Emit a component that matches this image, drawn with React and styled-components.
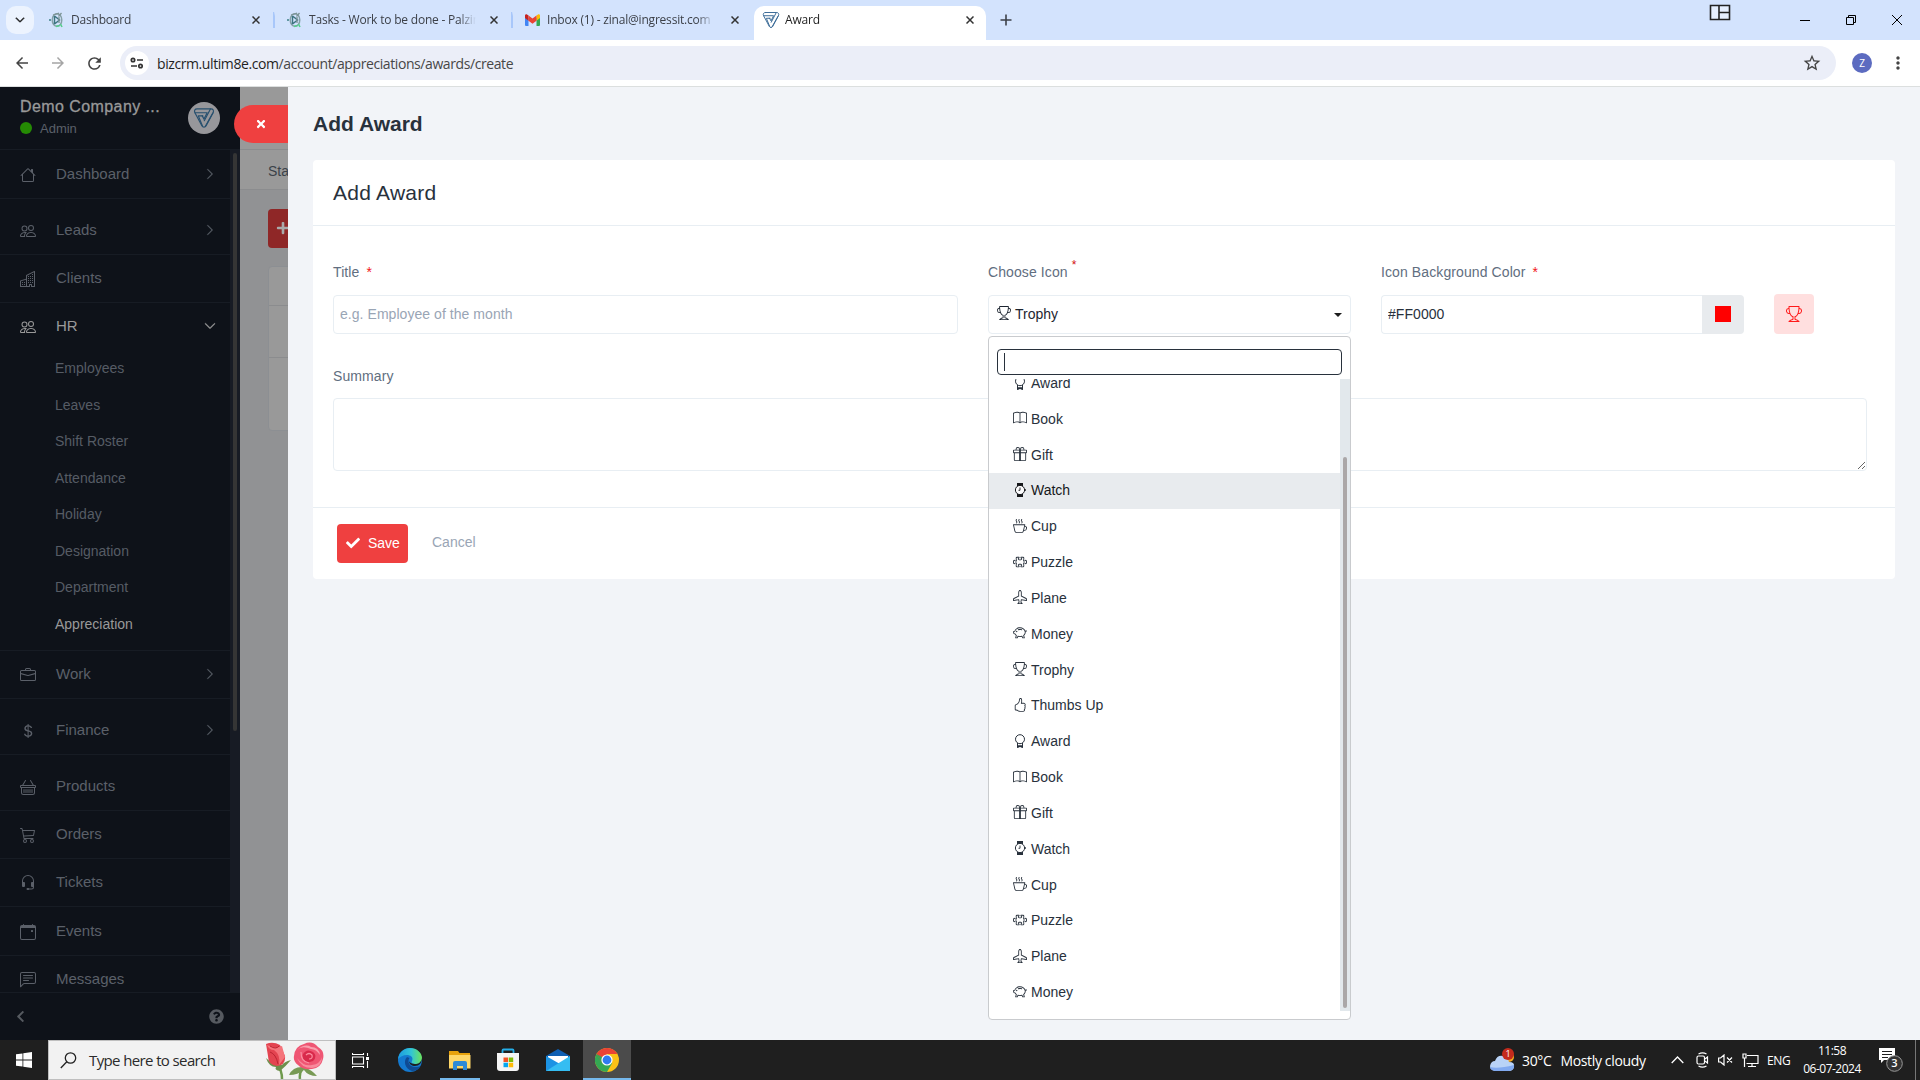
import React from "react";
import styled, { createGlobalStyle, css } from "styled-components";
import {
  BsAirplane,
  BsBasket,
  BsBook,
  BsBriefcase,
  BsBuildings,
  BsCalendarEvent,
  BsCart3,
  BsChatLeftText,
  BsChevronDown,
  BsChevronRight,
  BsCupHot,
  BsCurrencyDollar,
  BsGift,
  BsHandThumbsUp,
  BsHeadset,
  BsHouse,
  BsPeople,
  BsPiggyBank,
  BsPuzzle,
  BsTrophy,
} from "react-icons/bs";
import {
  FaCheck,
  FaChevronLeft,
  FaPlus,
  FaQuestionCircle,
  FaTimes,
} from "react-icons/fa";
import {
  MdArrowBack,
  MdArrowForward,
  MdMoreVert,
  MdRefresh,
  MdStarOutline,
} from "react-icons/md";

/* ---------- icons ---------- */

const BrandLogo = ({ size, color }) => (
  <svg width={size} height={size} viewBox="0 0 24 24" fill="none" stroke={color} strokeWidth="1.3" strokeLinejoin="round" strokeLinecap="round">
    <path d="M4.500 2h15c2.500 0 3.500 2 2.400 4.200L14.300 20.500c-1 2-3.600 2-4.600 0L2.100 6.200C1 4 2 2 4.500 2z" />
    <path d="M2.200 6.300h13.300L12 13.200l-2-3.700" />
    <path d="M21.800 6.300L13.500 21M19 2.200L12.300 15" />
    <path d="M10.200 20.500L5.800 9.700h5" />
  </svg>
);

const PalzinLogo = () => (
  <svg width="14" height="16" viewBox="0 0 14 16" fill="none">
    <ellipse cx="8" cy="8" rx="4.800" ry="6.300" stroke="#84a0a6" strokeWidth="1.400" />
    <path d="M5.500 4v8.300M5.500 4l5 4-5 4" stroke="#3d7480" strokeWidth="1.500" />
    <path d="M4 3l6-1.800M12.500 1l-3 3.500M10 5v6" stroke="#7d9496" strokeWidth="1.300" />
    <path d="M7 14.500l3.500-1M11.500 12l1.500 3" stroke="#57cf8e" strokeWidth="1.600" />
    <circle cx="1" cy="8" r="1" fill="#3b7f86" />
  </svg>
);

const GmailLogo = () => (
  <svg width="15" height="12" viewBox="0 0 15 12">
    <path d="M0 2v9a1 1 0 0 0 1 1h2.500V4z" fill="#4285f4" />
    <path d="M15 2v9a1 1 0 0 1-1 1h-2.500V4z" fill="#34a853" />
    <path d="M11.500 1.500L13 .4c.9-.6 2 0 2 1.200V4l-3.500 2.700z" fill="#fbbc04" />
    <path d="M3.500 1.500L2 .4C1.100-.2 0 .4 0 1.600V4l3.500 2.700z" fill="#c5221f" />
    <path d="M3.500 1.500l4 3 4-3v5.200l-4 3-4-3z" fill="#ea4335" />
  </svg>
);

const AwardIcon = () => (
  <svg width="14" height="14" viewBox="0 0 14 14" fill="none" stroke="currentColor">
    <circle cx="7" cy="5.200" r="4.500" strokeWidth="1" />
    <path d="M4.500 9v4.200L7 12.200l2.500 1V9" strokeWidth="1" />
    <path d="M4 11.200h6V14l-3-.9L4 14z" fill="currentColor" stroke="none" />
  </svg>
);

const WatchIcon = () => (
  <svg width="14" height="14" viewBox="0 0 14 14" fill="none" stroke="currentColor">
    <path d="M4 0h6v3H4zM4 11h6v3H4z" fill="currentColor" stroke="none" />
    <circle cx="7" cy="7" r="4.600" fill="#fff" fillOpacity=".85" />
    <path d="M7 4.500V7.300H5.500M12.300 6v2" strokeWidth=".9" />
  </svg>
);

const SiteInfoIcon = () => (
  <svg width="14" height="12" viewBox="0 0 14 12" fill="none" stroke="#333" strokeWidth="1.700">
    <circle cx="3" cy="3" r="1.700" />
    <path d="M7 3h6M1 9h6" />
    <circle cx="10.500" cy="9" r="1.700" />
  </svg>
);

const SnapIcon = () => (
  <svg width="22" height="17" viewBox="0 0 22 17" fill="#e6effe" stroke="#222" strokeWidth="1.600">
    <path d="M1.500 1.500h19v14h-19zM10 1.500v14M10 8.500h10.500" />
  </svg>
);

const WindowIcon = ({ kind }) => (
  <svg width="10" height="10" viewBox="0 0 10 10" fill="none" stroke="#000">
    {kind === "min" && <path d="M0 5.500h10" />}
    {kind === "max" && <path d="M.5 2.500h7v7h-7zM2.500 2.500v-2h7v7h-2" />}
    {kind === "close" && <path d="M0 0l10 10M10 0L0 10" />}
  </svg>
);

const WindowsLogo = () => (
  <svg width="16" height="16" viewBox="0 0 16 16" fill="#fff">
    <path d="M0 2.300l6.500-.9v6.100H0zM7.300 1.300L16 0v7.500H7.300zM0 8.400h6.500v6.200L0 13.700zM7.300 8.400H16V16l-8.700-1.300z" />
  </svg>
);

const SearchGlass = () => (
  <svg width="17" height="17" viewBox="0 0 17 17" fill="none" stroke="#222" strokeWidth="1.300">
    <circle cx="10.500" cy="6" r="5.200" />
    <path d="M6.800 9.800L.8 16" />
  </svg>
);

const Roses = () => (
  <svg width="60" height="37" viewBox="0 0 60 37">
    <path d="M12 22q5 6 5 15M38 26q-4 5-3 11" fill="none" stroke="#6f9a4e" strokeWidth="2.500" />
    <path d="M1 16q3 9 10 9-2 3 4 4 6-5 11-11-7 2-9 5-8 1-16-7z" fill="#6d8f4c" />
    <path d="M24 33q4-9 15-8 8 3 13 9-9 0-13-6-6 5-15 5z" fill="#789a55" />
    <path d="M1 2q7-3 14 1l5 11q1 9-8 10Q3 23 3 14z" fill="#e34450" />
    <path d="M2 3l9 3 6-2 3 11-6 8q2-10-5-15-5 0-7-5z" fill="#f5747b" />
    <path d="M5 4q6 4 9 0M5 10q6 2 8 12" fill="none" stroke="#bb2331" strokeWidth="1" />
    <path d="M29 14q1-10 10-12 8-4 14 3 7 4 5 12-2 9-11 10-10 1-14-4-5-4-4-9z" fill="#ef5673" />
    <path d="M32 8q8-7 14-3 8 0 9 8-4-6-9-6-9-4-14 1z" fill="#f9a0ae" />
    <path d="M32 16q7 9 15 7 8-1 10-8 0 10-10 11-11 0-15-10z" fill="#f88a9c" />
    <path d="M38 12q4-6 10-2 5 4 0 9-7 3-10-2-1-3 0-5z" fill="#d92a4b" />
    <path d="M41 13q3-3 6 0 1 4-3 4M36 10q0 10 8 11" fill="none" stroke="#fb8ea1" strokeWidth="1.200" />
  </svg>
);

const TaskViewIcon = () => (
  <svg width="17" height="17" viewBox="0 0 17 17" fill="none" stroke="#fff" strokeWidth="1.100">
    <path d="M.5 5h11v7H.5zM.5 1v1.500h11V1M.5 16v-1.500h11V16M15.500 1v3M15.500 9v7" />
    <path d="M14 5h3v3h-3z" fill="#fff" stroke="none" />
  </svg>
);

const EdgeLogo = () => (
  <svg width="24" height="24" viewBox="0 0 24 24">
    <defs>
      <linearGradient id="edgeTop" x1="0" x2="1">
        <stop offset="0" stopColor="#1c9be0" />
        <stop offset=".55" stopColor="#32c5d6" />
        <stop offset="1" stopColor="#6ce45b" />
      </linearGradient>
    </defs>
    <circle cx="12" cy="12" r="12" fill="#1479cf" />
    <path d="M0 11C1 4 6 0 12 0c7 0 12 5 12 10 0 4-3 6-6 6-4 0-5-1-4-3 2-4-2-6-5-6C5 7 2 9 0 11z" fill="url(#edgeTop)" />
    <path d="M9 9c-4 4-2 12 5 14 4 0 7-2 8.500-5-4 2-12 1.500-12-5 0-2 1-3 1-3z" fill="#0f4b94" />
    <path d="M24 10c0 5-3 8-7 8-3 0-6-2-6-5 0 0 1 3 6 3 3 0 6-1 7-6z" fill="#1d1f22" />
  </svg>
);

const ExplorerLogo = () => (
  <svg width="22" height="19" viewBox="0 0 22 19">
    <path d="M0 0h9l1.500 2H21v15H0z" fill="#e8a20c" />
    <path d="M0 4h21.500v13.500H0z" fill="#ffd768" />
    <path d="M4 19v-7q0-2 2-2h10q2 0 2 2v7h-4v-4H8v4z" fill="#2e8ad8" />
  </svg>
);

const StoreLogo = () => (
  <svg width="24" height="24" viewBox="0 0 24 24">
    <path d="M6.500 6V2.500q0-1 1-1h9q1 0 1 1V6" fill="none" stroke="#25aee8" strokeWidth="1.800" />
    <path d="M1 5h22v15q0 3-3 3H4q-3 0-3-3z" fill="#f5f5f5" />
    <path d="M7.500 9.500H12V14H7.500z" fill="#f35325" />
    <path d="M12.700 9.500h4.500V14h-4.500z" fill="#81bc06" />
    <path d="M7.500 14.700H12v4.500H7.500z" fill="#05a6f0" />
    <path d="M12.700 14.700h4.500v4.500h-4.500z" fill="#ffba08" />
  </svg>
);

const MailLogo = () => (
  <svg width="24" height="22" viewBox="0 0 24 22">
    <path d="M0 7l12-7 12 7v15H0z" fill="#0f5fb2" />
    <path d="M2 7h20v7H2z" fill="#fff" />
    <path d="M0 7l14 8L0 22z" fill="#1c93e4" />
    <path d="M24 7L0 22h24z" fill="#35bdf2" />
  </svg>
);

const ChromeLogo = () => (
  <svg width="24" height="24" viewBox="0 0 24 24">
    <circle cx="12" cy="12" r="12" fill="#fbc116" />
    <path d="M1.600 6A12 12 0 0 0 12 24l5.200-9L12 12z" fill="#34a853" />
    <path d="M1.600 6A12 12 0 0 1 22.400 6H12l-5.200 9z" fill="#ea4335" />
    <path d="M1.600 6L6.800 15 12 12z" fill="#34a853" />
    <circle cx="12" cy="12" r="5.600" fill="#fff" />
    <circle cx="12" cy="12" r="4.400" fill="#2f7bf0" />
  </svg>
);

const WeatherIcon = () => (
  <svg width="25" height="24" viewBox="0 0 25 24">
    <circle cx="19" cy="9" r="5" fill="#f5a81c" />
    <path d="M5 23q-5-1-5-5 1-5 5-5 2-6 8-5 5 1 6 6 6 0 5 5-1 4-5 4z" fill="#b9d3f7" />
    <path d="M5 23q-5-1-5-4 8 2 24-2 1 5-5 6z" fill="#82aaf0" />
    <circle cx="18" cy="6" r="6" fill="#c42b1c" />
    <text x="18" y="9" fontSize="9" fontFamily="Open Sans, sans-serif" fill="#fff" textAnchor="middle">1</text>
  </svg>
);

const TrayUp = () => (
  <svg width="13" height="8" viewBox="0 0 13 8" fill="none" stroke="#fff" strokeWidth="1.300">
    <path d="M.7 7l5.800-6 5.800 6" />
  </svg>
);

const TrayCamera = () => (
  <svg width="13" height="16" viewBox="0 0 13 16" fill="none" stroke="#fff" strokeWidth="1.200">
    <rect x="1" y="4" width="7.500" height="8" rx="1.500" />
    <path d="M9 7l2.500-2v6L9 9M2.500 2q4-2.200 8 0M2.500 14q4 2.200 8 0" />
  </svg>
);

const TrayVolume = () => (
  <svg width="15" height="12" viewBox="0 0 15 12" fill="none" stroke="#fff" strokeWidth="1.200">
    <path d="M.6 4h2L6 1v10L2.600 8h-2zM9 3.500l5 5M14 3.500l-5 5" />
  </svg>
);

const TrayNetwork = () => (
  <svg width="17" height="15" viewBox="0 0 17 15" fill="none" stroke="#fff" strokeWidth="1.200">
    <path d="M5 2.500h11v8H4.500M10 10.500v3M6 13.500h8M1 1h3v4H1zM2.500 5v9" />
  </svg>
);

const NotificationIcon = () => (
  <svg width="25" height="26" viewBox="0 0 25 26">
    <path d="M0 1h16v12H5l-3 3v-3H0z" fill="#fff" />
    <path d="M3 4.500h10M3 7.500h10M3 10.500h6" stroke="#1f1f1f" strokeWidth="1.100" />
    <circle cx="15.500" cy="16.500" r="7.800" fill="#333" stroke="#999" />
    <text x="15.500" y="20.300" fontSize="11" fontWeight="600" fontFamily="Open Sans, sans-serif" fill="#fff" textAnchor="middle">3</text>
  </svg>
);

/* ---------- data ---------- */

const tabs = [
  { id: 1, title: "Dashboard", icon: <PalzinLogo />, width: 238 },
  { id: 2, title: "Tasks - Work to be done - Palzin", icon: <PalzinLogo />, width: 238 },
  { id: 3, title: "Inbox (1) - zinal@ingressit.com", icon: <GmailLogo />, width: 241 },
  { id: 4, title: "Award", icon: <BrandLogo size={18} color="#3a6a96" />, width: 232, active: true },
];

const hrLinks = [
  "Employees",
  "Leaves",
  "Shift Roster",
  "Attendance",
  "Holiday",
  "Designation",
  "Department",
  "Appreciation",
];

const menu = [
  { name: "Dashboard", icon: BsHouse, arrow: true, height: 49 },
  { name: "Leads", icon: BsPeople, arrow: true, height: 56 },
  { name: "Clients", icon: BsBuildings, height: 48 },
  { name: "HR", icon: BsPeople, height: 48, links: hrLinks },
  { name: "Work", icon: BsBriefcase, arrow: true, height: 48 },
  { name: "Finance", icon: BsCurrencyDollar, arrow: true, height: 56 },
  { name: "Products", icon: BsBasket, height: 56 },
  { name: "Orders", icon: BsCart3, height: 48 },
  { name: "Tickets", icon: BsHeadset, height: 48 },
  { name: "Events", icon: BsCalendarEvent, height: 49 },
  { name: "Messages", icon: BsChatLeftText, height: 48 },
];

const awardIcons = {
  Award: AwardIcon,
  Book: BsBook,
  Gift: BsGift,
  Watch: WatchIcon,
  Cup: BsCupHot,
  Puzzle: BsPuzzle,
  Plane: BsAirplane,
  Money: BsPiggyBank,
  Trophy: BsTrophy,
  "Thumbs Up": BsHandThumbsUp,
};

const options = [
  "Award",
  "Book",
  "Gift",
  "Watch",
  "Cup",
  "Puzzle",
  "Plane",
  "Money",
  "Trophy",
  "Thumbs Up",
  "Award",
  "Book",
  "Gift",
  "Watch",
  "Cup",
  "Puzzle",
  "Plane",
  "Money",
];

/* ---------- components ---------- */

const Browser = () => (
  <>
    <TabStrip>
      <TabSearch>
        <BsChevronDown size={10} strokeWidth={1.6} />
      </TabSearch>
      {tabs.map((tab) => (
        <Tab
          key={tab.id}
          $width={tab.width}
          $active={tab.active}
          $divider={tab.id < 3}
        >
          <TabIcon>{tab.icon}</TabIcon>
          <TabTitle>{tab.title}</TabTitle>
          <TabClose viewBox="0 0 8 8">
            <path d="M.5.5l7 7M7.500.5l-7 7" />
          </TabClose>
        </Tab>
      ))}
      <NewTab viewBox="0 0 12 12">
        <path d="M6 .5v11M.5 6h11" />
      </NewTab>
      <SnapSlot>
        <SnapIcon />
      </SnapSlot>
      <WindowButtons>
        <WindowIcon kind="min" />
        <WindowIcon kind="max" />
        <WindowIcon kind="close" />
      </WindowButtons>
    </TabStrip>
    <Toolbar>
      <NavButton>
        <MdArrowBack size={18} />
      </NavButton>
      <NavButton $disabled>
        <MdArrowForward size={18} />
      </NavButton>
      <NavButton>
        <MdRefresh size={19} />
      </NavButton>
      <AddressBar>
        <SiteInfo>
          <SiteInfoIcon />
        </SiteInfo>
        <Url>
          <b>bizcrm.ultim8e.com</b>/account/appreciations/awards/create
        </Url>
        <MdStarOutline size={20} />
      </AddressBar>
      <Avatar>Z</Avatar>
      <MdMoreVert size={20} />
    </Toolbar>
  </>
);

const Sidebar = () => (
  <Side>
    <Company>
      <div>
        <CompanyName>Demo Company ...</CompanyName>
        <Role>
          <Online />
          Admin
        </Role>
      </div>
      <CompanyLogo>
        <BrandLogo size={22} color="#27506f" />
      </CompanyLogo>
    </Company>
    <MenuArea>
      <Menu>
        {menu.map((item) => (
          <MenuItem key={item.name}>
            <MenuLink $height={item.height} $open={item.links}>
              <item.icon size={16} />
              <span>{item.name}</span>
              {item.arrow && <BsChevronRight size={12} strokeWidth={0.5} />}
              {item.links && <BsChevronDown size={12} strokeWidth={0.8} />}
            </MenuLink>
            {item.links && (
              <SubMenu>
                {item.links.map((link) => (
                  <SubLink key={link} $active={link === "Appreciation"}>
                    {link}
                  </SubLink>
                ))}
              </SubMenu>
            )}
          </MenuItem>
        ))}
      </Menu>
      <MenuTrack>
        <MenuThumb />
      </MenuTrack>
    </MenuArea>
    <SideFooter>
      <FaChevronLeft size={13} />
      <FaQuestionCircle size={15} />
    </SideFooter>
  </Side>
);

const Select = () => {
  const [highlighted, setHighlighted] = React.useState(3);

  return (
    <SelectWrap>
      <SelectBox>
        <BsTrophy size={14} />
        <span>Trophy</span>
        <Caret />
      </SelectBox>
      <Dropdown>
        <DropdownSearch>
          <Cursor />
        </DropdownSearch>
        <OptionArea>
          <OptionList>
            {options.map((name, index) => {
              const Icon = awardIcons[name];
              return (
                <Option
                  key={index}
                  $highlighted={index === highlighted}
                  onMouseEnter={() => setHighlighted(index)}
                >
                  <Icon size={14} />
                  {name}
                </Option>
              );
            })}
          </OptionList>
          <OptionTrack>
            <OptionThumb />
          </OptionTrack>
        </OptionArea>
      </Dropdown>
    </SelectWrap>
  );
};

const AwardForm = () => (
  <Card>
    <CardTitle>Add Award</CardTitle>
    <CardBody>
      <FieldRow>
        <Field $width={625}>
          <Label>
            Title<Star>*</Star>
          </Label>
          <Input placeholder="e.g. Employee of the month" />
        </Field>
        <Field $width={363}>
          <Label>
            Choose Icon<Star $raised>*</Star>
          </Label>
          <Select />
        </Field>
        <Field $width={363}>
          <Label>
            Icon Background Color<Star>*</Star>
          </Label>
          <ColorGroup>
            <Input defaultValue="#FF0000" />
            <ColorAddon>
              <Swatch />
            </ColorAddon>
          </ColorGroup>
        </Field>
        <Preview>
          <BsTrophy size={16} />
        </Preview>
      </FieldRow>
      <SummaryField>
        <Label>Summary</Label>
        <TextArea />
      </SummaryField>
    </CardBody>
    <CardFooter>
      <SaveButton>
        <FaCheck size={14} />
        Save
      </SaveButton>
      <Cancel>Cancel</Cancel>
    </CardFooter>
  </Card>
);

const Taskbar = () => (
  <Bar>
    <StartButton>
      <WindowsLogo />
    </StartButton>
    <SearchBox>
      <SearchGlass />
      <span>Type here to search</span>
      <Roses />
    </SearchBox>
    <TaskButton>
      <TaskViewIcon />
    </TaskButton>
    <TaskButton $width={52}>
      <EdgeLogo />
    </TaskButton>
    <TaskButton $running>
      <ExplorerLogo />
    </TaskButton>
    <TaskButton>
      <StoreLogo />
    </TaskButton>
    <TaskButton $width={51}>
      <MailLogo />
    </TaskButton>
    <TaskButton $running $current>
      <ChromeLogo />
    </TaskButton>
    <Tray>
      <WeatherIcon />
      <Weather>
        <span>30°C</span>
        <span>Mostly cloudy</span>
      </Weather>
      <TrayIcons>
        <TrayUp />
        <TrayCamera />
        <TrayVolume />
        <TrayNetwork />
      </TrayIcons>
      <Language>ENG</Language>
      <Clock>
        <span>11:58</span>
        <span>06-07-2024</span>
      </Clock>
      <NotificationIcon />
      <ShowDesktop />
    </Tray>
  </Bar>
);

const App = () => (
  <Screen>
    <GlobalStyle />
    <Browser />
    <Page>
      <Sidebar />
      <Behind>
        <BehindHeader />
        <BehindTabs>Status</BehindTabs>
        <BehindBody>
          <BehindAdd>
            <FaPlus size={14} />
          </BehindAdd>
          <BehindTable>
            <BehindRow $height={39} />
            <BehindRow $height={52} />
          </BehindTable>
        </BehindBody>
      </Behind>
      <Panel>
        <CloseTab>
          <FaTimes size={12} />
        </CloseTab>
        <PanelTitle>Add Award</PanelTitle>
        <AwardForm />
      </Panel>
    </Page>
    <Taskbar />
  </Screen>
);

/* ---------- styles ---------- */

const GlobalStyle = createGlobalStyle`
  * {
    box-sizing: border-box;
  }
  body {
    margin: 0;
    overflow: hidden;
    font-family: "Liberation Sans", Arial, sans-serif;
    font-size: 14px;
  }
  svg {
    flex-shrink: 0;
  }
`;

const Screen = styled.div`
  display: flex;
  flex-direction: column;
  width: 1920px;
  height: 1080px;
  overflow: hidden;
`;

const uiFont = css`
  font-family: "Open Sans", "Noto Sans", sans-serif;
`;

const TabStrip = styled.div`
  ${uiFont}
  display: flex;
  align-items: center;
  height: 40px;
  padding-left: 6px;
  background: #d3e3fd;
`;

const TabSearch = styled.div`
  display: grid;
  place-items: center;
  width: 28px;
  height: 28px;
  margin-right: 3px;
  border-radius: 10px;
  background: #ecf3fe;
  color: #1f1f1f;
`;

const Tab = styled.div`
  display: flex;
  align-items: center;
  align-self: flex-end;
  width: ${(props) => props.$width}px;
  height: 34px;
  padding: 0 ${(props) => (props.$active ? "12px 6px 8px" : "15px 6px 11px")};
  border-radius: 10px 10px 0 0;
  background: ${(props) => (props.$active ? "#fff" : "transparent")};
  color: ${(props) => (props.$active ? "#1f1f1f" : "#3c4048")};

  ${(props) =>
    props.$divider &&
    css`
      background: linear-gradient(#a8c7fa, #a8c7fa) right 0 top 6px / 2px 16px
        no-repeat;
    `}
`;

const TabIcon = styled.span`
  display: grid;
  place-items: center;
  width: 16px;
  margin-right: 7px;
`;

const TabTitle = styled.span`
  flex: 1;
  overflow: hidden;
  white-space: nowrap;
  font-size: 12px;
  letter-spacing: -0.2px;
  line-height: 18px;
  mask-image: linear-gradient(to right, #000 150px, transparent 167px);
`;

const TabClose = styled.svg`
  width: 8px;
  height: 8px;
  margin-left: 14px;
  stroke: #333;
  stroke-width: 1.5;
`;

const NewTab = styled.svg`
  width: 12px;
  height: 12px;
  margin-left: 14px;
  stroke: #3c4048;
  stroke-width: 1.6;
`;

const SnapSlot = styled.div`
  align-self: flex-start;
  margin: 4px 69px 0 auto;
`;

const WindowButtons = styled.div`
  display: flex;
  gap: 36px;
  padding-right: 18px;
`;

const Toolbar = styled.div`
  ${uiFont}
  display: flex;
  align-items: center;
  height: 47px;
  padding: 0 12px 0 4px;
  border-bottom: 1px solid #dcdfdf;
  background: #fff;
  color: #444;
`;

const NavButton = styled.div`
  display: grid;
  place-items: center;
  width: 36px;
  color: ${(props) => (props.$disabled ? "#a5a5a5" : "#444")};
`;

const AddressBar = styled.div`
  display: flex;
  flex: 1;
  align-items: center;
  height: 34px;
  margin-left: 8px;
  padding: 0 14px 0 5px;
  border-radius: 17px;
  background: #ebeef8;
`;

const SiteInfo = styled.div`
  display: grid;
  place-items: center;
  width: 24px;
  height: 24px;
  border-radius: 50%;
  background: #fff;
`;

const Url = styled.div`
  flex: 1;
  padding-left: 8px;
  font-size: 14px;
  letter-spacing: -0.41px;
  color: #474747;

  b {
    font-weight: 400;
    color: #1f1f1f;
  }
`;

const Avatar = styled.div`
  display: grid;
  place-items: center;
  width: 20px;
  height: 20px;
  margin: 0 16px;
  border-radius: 50%;
  background: #5c6bc0;
  color: #fff;
  font-size: 10px;
`;

const Page = styled.div`
  display: flex;
  height: 953px;
`;

const Side = styled.div`
  display: flex;
  flex-direction: column;
  width: 240px;
  background: #0e1219;
  color: #5b6069;
`;

const Company = styled.div`
  display: flex;
  justify-content: space-between;
  height: 63px;
  padding: 10px 20px 0;
  border-bottom: 1px solid #171c24;
`;

const CompanyName = styled.div`
  font-size: 16px;
  line-height: 20px;
  letter-spacing: 0.42px;
  color: #999;
  -webkit-text-stroke: 0.3px #999;
`;

const Role = styled.div`
  display: flex;
  align-items: center;
  gap: 8px;
  margin-top: 2px;
  font-size: 13px;
  line-height: 20px;
`;

const Online = styled.span`
  width: 12px;
  height: 12px;
  margin-bottom: 3px;
  border-radius: 50%;
  background: #258b04;
`;

const CompanyLogo = styled.div`
  display: grid;
  place-items: center;
  width: 32px;
  height: 32px;
  margin-top: 5px;
  border-radius: 50%;
  background: #97979b;
`;

const MenuArea = styled.div`
  display: flex;
  height: 842px;
  overflow: hidden;
`;

const Menu = styled.div`
  flex: 1;
`;

const MenuItem = styled.div`
  border-bottom: 1px solid #171c24;
`;

const MenuLink = styled.div`
  display: flex;
  align-items: flex-end;
  height: ${(props) => props.$height - 1}px;
  padding: 0 14px 14px 20px;
  font-size: 15px;
  line-height: 20px;
  color: ${(props) => (props.$open ? "#999" : "#5b6069")};

  span {
    flex: 1;
    padding-left: 20px;
  }

  svg:first-child {
    margin-bottom: 1px;
  }

  svg:last-child {
    margin-bottom: 4px;
  }
`;

const SubMenu = styled.div`
  padding-bottom: 8px;
`;

const SubLink = styled.div`
  height: 36.5px;
  padding-left: 55px;
  line-height: 36px;
  color: ${(props) => (props.$active ? "#999" : "#565c65")};
`;

const MenuTrack = styled.div`
  width: 10px;
  padding: 3px 3px 0;
  background: #171b24;
`;

const MenuThumb = styled.div`
  height: 578px;
  border-radius: 2px;
  background: #353535;
`;

const SideFooter = styled.div`
  display: flex;
  flex: 1;
  align-items: center;
  justify-content: space-between;
  padding: 0 16px 0 14px;
  border-top: 1px solid #171c24;
  color: #565a60;
`;

const Behind = styled.div`
  display: flex;
  flex-direction: column;
  width: 48px;
  overflow: hidden;
  background: #919294;
`;

const BehindHeader = styled.div`
  height: 63px;
  border-bottom: 1px solid #8b8c8e;
  background: #999;
`;

const BehindTabs = styled.div`
  height: 40px;
  padding-left: 28px;
  border-bottom: 1px solid #8b8c8e;
  background: #999;
  line-height: 42px;
  color: #3b4249;
`;

const BehindBody = styled.div`
  padding: 19px 0 0 28px;
`;

const BehindAdd = styled.div`
  display: flex;
  align-items: center;
  width: 100px;
  height: 39px;
  padding: 0 0 2px 8px;
  border-radius: 4px;
  background: #8f2727;
  color: #aaa;
`;

const BehindTable = styled.div`
  width: 200px;
  height: 165px;
  margin-top: 18px;
  border: 1px solid #8c8f93;
  border-radius: 4px;
  background: #999;
`;

const BehindRow = styled.div`
  height: ${(props) => props.$height}px;
  border-bottom: 1px solid #8b8c8e;
`;

const Panel = styled.div`
  position: relative;
  flex: 1;
  padding: 0 25px;
  background: #f2f4f8;
  color: #28313c;
`;

const CloseTab = styled.div`
  position: absolute;
  top: 18px;
  left: -54px;
  display: flex;
  align-items: center;
  width: 54px;
  height: 38px;
  padding-left: 21px;
  border-radius: 19px 0 0 19px;
  background: #ef4040;
  color: #fff;
`;

const PanelTitle = styled.h1`
  height: 73px;
  margin: 0;
  font-size: 21px;
  font-weight: 700;
  line-height: 73px;
`;

const Card = styled.div`
  height: 419px;
  border-radius: 4px;
  background: #fff;
`;

const CardTitle = styled.h2`
  height: 66px;
  margin: 0;
  padding: 0 20px;
  border-bottom: 1px solid #e8eef3;
  font-size: 21px;
  font-weight: 400;
  letter-spacing: 0.25px;
  line-height: 65px;
`;

const CardBody = styled.div`
  height: 281px;
  padding: 36px 20px 0;
`;

const FieldRow = styled.div`
  display: flex;
  align-items: flex-end;
  gap: 30px;
`;

const Field = styled.div`
  width: ${(props) => props.$width}px;
`;

const Label = styled.div`
  height: 20px;
  margin-bottom: 13px;
  line-height: 20px;
  letter-spacing: 0.1px;
  color: #616e80;
`;

const Star = styled.sup`
  margin-left: ${(props) => (props.$raised ? 4 : 7)}px;
  color: ${(props) => (props.$raised ? "#d21010" : "#f21818")};
  font-size: ${(props) => (props.$raised ? 12 : 14)}px;
  line-height: 0;
  vertical-align: ${(props) => (props.$raised ? 8 : 0)}px;
`;

const Input = styled.input`
  width: 100%;
  height: 39px;
  padding: 0 6px 2px;
  border: 1px solid #e8eef3;
  border-radius: 4px;
  outline: none;
  background: #fff;
  color: #28313c;
  font: inherit;
  letter-spacing: 0.05px;

  &::placeholder {
    color: #99a5b5;
  }
`;

const SelectWrap = styled.div`
  position: relative;
`;

const SelectBox = styled.div`
  display: flex;
  align-items: center;
  height: 39px;
  padding: 0 8px;
  border: 1px solid #e8eef3;
  border-radius: 4px;
  color: #1d2530;

  span {
    flex: 1;
    padding: 0 0 2px 4px;
  }

  svg {
    margin-bottom: 3px;
  }
`;

const Caret = styled.i`
  border: 4px solid transparent;
  border-top-color: #1d1d1d;
  border-bottom: 0;
`;

const Dropdown = styled.div`
  position: absolute;
  top: 41px;
  left: 0;
  z-index: 2;
  width: 363px;
  height: 684px;
  padding-top: 12px;
  border: 1px solid #c9cbce;
  border-radius: 4px;
  background: #fff;
`;

const DropdownSearch = styled.div`
  height: 26px;
  margin: 0 8px 4px;
  padding: 3px 6px;
  border: 1px solid #28313c;
  border-radius: 4px;
`;

const Cursor = styled.div`
  width: 1px;
  height: 18px;
  background: #28313c;
`;

const OptionArea = styled.div`
  display: flex;
  height: 632px;
`;

const OptionList = styled.div`
  display: flex;
  flex: 1;
  flex-direction: column;
  justify-content: flex-end;
  padding-bottom: 0.5px;
  overflow: hidden;
`;

const Option = styled.div`
  display: flex;
  flex-shrink: 0;
  align-items: center;
  gap: 4px;
  height: 35.83px;
  padding: 0 0 1px 24px;
  background: ${(props) => (props.$highlighted ? "#e8ebee" : "#fff")};
  color: ${(props) => (props.$highlighted ? "#16181b" : "#28313c")};

  svg {
    margin-bottom: 1px;
  }
`;

const OptionTrack = styled.div`
  width: 10px;
  padding: 78px 3px 0;
  background: #e2e8ec;
`;

const OptionThumb = styled.div`
  height: 551px;
  border-radius: 2px;
  background: #aaa7a8;
`;

const ColorGroup = styled.div`
  display: flex;

  ${Input} {
    flex: 1;
    border-right: 0;
    border-radius: 4px 0 0 4px;
  }
`;

const ColorAddon = styled.div`
  display: grid;
  place-items: center;
  width: 42px;
  height: 39px;
  padding-bottom: 1px;
  border-radius: 0 4px 4px 0;
  background: #e8ebee;
`;

const Swatch = styled.div`
  width: 16px;
  height: 16px;
  background: #ff0000;
`;

const Preview = styled.div`
  display: grid;
  place-items: center;
  width: 40px;
  height: 40px;
  border-radius: 4px;
  background: #ffdfdf;
  color: #ff1a1a;
`;

const SummaryField = styled.div`
  margin-top: 32px;

  ${Label} {
    margin-bottom: 12px;
  }
`;

const TextArea = styled.textarea`
  display: block;
  width: 1534px;
  height: 73px;
  border: 1px solid #e8eef3;
  border-radius: 4px;
  outline: none;
  resize: vertical;
`;

const CardFooter = styled.div`
  display: flex;
  align-items: flex-start;
  height: 72px;
  padding: 16px 24px;
  border-top: 1px solid #e8eef3;
`;

const SaveButton = styled.button`
  display: flex;
  align-items: center;
  gap: 8px;
  width: 71px;
  height: 39px;
  padding: 0 9px 1px;
  border: 0;
  border-radius: 4px;
  background: #ef4040;
  color: #fff;
  font: inherit;
`;

const Cancel = styled.a`
  margin-left: 24px;
  line-height: 37px;
  color: #99a5b5;
`;

const Bar = styled.div`
  ${uiFont}
  display: flex;
  height: 40px;
  background: #1f1f1f;
  color: #fff;
`;

const StartButton = styled.div`
  display: grid;
  place-items: center;
  width: 48px;
`;

const SearchBox = styled.div`
  display: flex;
  align-items: center;
  width: 288px;
  padding-left: 11px;
  border: 1px solid #bfbfbf;
  background: #f2f2f2;
  color: #2b2b2b;

  span {
    width: 188px;
    padding-left: 12px;
    white-space: nowrap;
    font-size: 15px;
    letter-spacing: -0.62px;
  }
`;

const TaskButton = styled.div`
  display: grid;
  place-items: center;
  width: ${(props) => props.$width || 48}px;
  background: ${(props) => (props.$current ? "#4b4b4b" : "transparent")};

  ${(props) =>
    props.$running &&
    css`
      background-image: linear-gradient(#76b9ed, #76b9ed);
      background-repeat: no-repeat;
      background-position: bottom center;
      background-size: ${props.$current ? 48 : 40}px 2px;
    `}
`;

const Tray = styled.div`
  display: flex;
  align-items: center;
  margin-left: auto;
`;

const Weather = styled.div`
  display: flex;
  gap: 9px;
  width: 156px;
  padding-left: 7px;
  white-space: nowrap;
  font-size: 14px;
  letter-spacing: -0.35px;
`;

const TrayIcons = styled.div`
  display: flex;
  align-items: center;
  gap: 9px;
  width: 96px;

  svg:first-child {
    margin-right: 3px;
  }
`;

const Language = styled.div`
  width: 36px;
  font-size: 12px;
  letter-spacing: -0.4px;
`;

const Clock = styled.div`
  display: flex;
  flex-direction: column;
  align-items: center;
  width: 58px;
  margin-right: 18px;
  font-size: 12px;
  line-height: 18px;
  letter-spacing: -0.5px;
`;

const ShowDesktop = styled.div`
  width: 5px;
  height: 40px;
  margin-left: 11px;
  border-left: 1px solid #777;
`;

export default App;
